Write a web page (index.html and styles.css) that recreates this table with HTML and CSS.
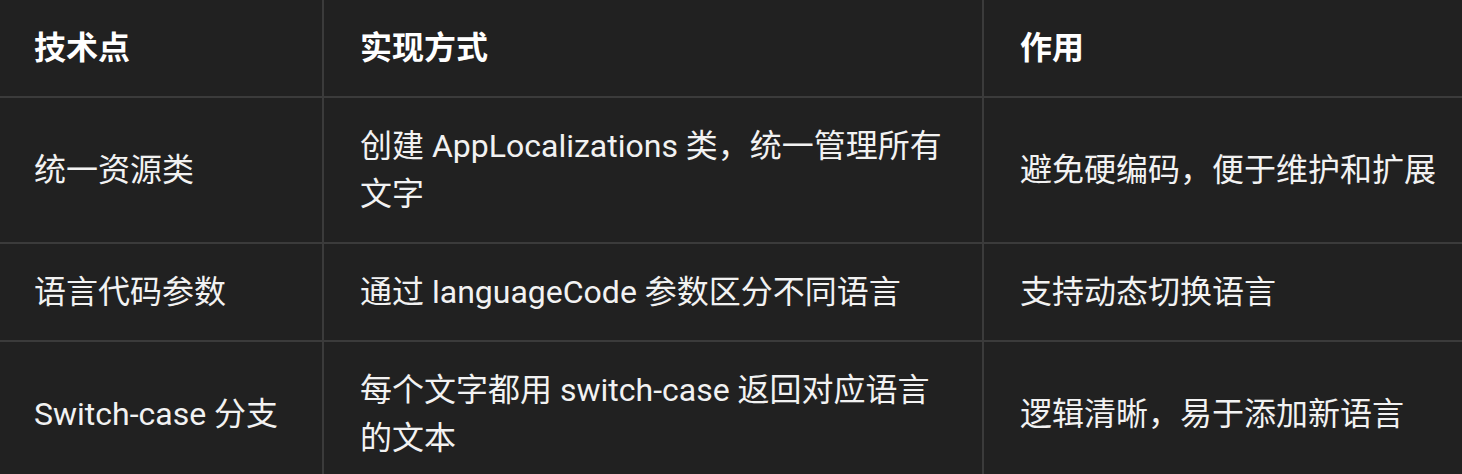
FILE: index.html
```html
<!DOCTYPE html>
<html lang="zh-CN">
<head>
<meta charset="utf-8">
<link rel="stylesheet" href="styles.css">
</head>
<body>
<div class="wrap">
<table class="tbl">
  <colgroup>
    <col class="c1">
    <col class="c2">
    <col class="c3">
  </colgroup>
  <thead>
    <tr><th>技术点</th><th>实现方式</th><th>作用</th></tr>
  </thead>
  <tbody>
    <tr><td>统一资源类</td><td>创建 AppLocalizations 类，统一管理所有文字</td><td>避免硬编码，便于维护和扩展</td></tr>
    <tr><td>语言代码参数</td><td>通过 languageCode 参数区分不同语言</td><td>支持动态切换语言</td></tr>
    <tr><td>Switch-case 分支</td><td>每个文字都用 switch-case 返回对应语言的文本</td><td>逻辑清晰，易于添加新语言</td></tr>
  </tbody>
</table>
</div>
</body>
</html>
```

FILE: styles.css
```css
html, body {
  margin: 0;
  padding: 0;
  background: #212121;
  overflow: hidden;
}
.wrap {
  margin-left: -4px;
  margin-top: -2px;
}
.tbl {
  border-collapse: collapse;
  table-layout: fixed;
  width: 1510px;
  font-family: "Roboto", "Noto Sans CJK SC", sans-serif;
  font-size: 32px;
  line-height: 48px;
  color: #f2f2f2;
}
.c1 { width: 326px; }
.c2 { width: 660px; }
.c3 { width: 524px; }
.tbl th, .tbl td {
  border: 2px solid #3b3b3b;
  padding: 24px 36px;
  text-align: left;
  vertical-align: middle;
}
.tbl th {
  font-weight: 600;
  color: #ffffff;
}
```
